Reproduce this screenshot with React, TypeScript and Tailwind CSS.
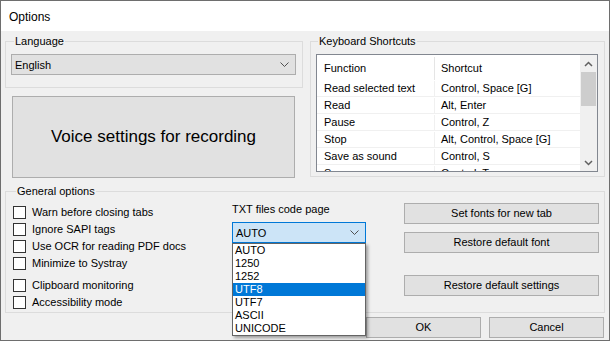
import React from "react";

function Chevron({ className = "" }: { className?: string }) {
  return (
    <svg width="9" height="5" viewBox="0 0 9 5" className={className}>
      <path d="M0.5 0.5 L4.5 4.5 L8.5 0.5" fill="none" stroke="#505050" strokeWidth="1" />
    </svg>
  );
}

function Checkbox({ label }: { label: string }) {
  return (
    <div className="flex items-center h-[17px] gap-[6px]">
      <div className="w-[13px] h-[13px] border border-[#333333] bg-white shrink-0" />
      <span className="leading-[15px] whitespace-nowrap">{label}</span>
    </div>
  );
}

function Btn({ label, className = "" }: { label: string; className?: string }) {
  return (
    <div
      className={
        "flex items-center justify-center border border-[#adadad] bg-[#e1e1e1] text-black " + className
      }
    >
      {label}
    </div>
  );
}

const rows: [string, string][] = [
  ["Read selected text", "Control, Space [G]"],
  ["Read", "Alt, Enter"],
  ["Pause", "Control, Z"],
  ["Stop", "Alt, Control, Space [G]"],
  ["Save as sound", "Control, S"],
  ["Save", "Control, T"],
];

const codePages = ["AUTO", "1250", "1252", "UTF8", "UTF7", "ASCII", "UNICODE"];

export default function App() {
  return (
    <div className="w-[610px] h-[341px] border border-[#6e6e6e] bg-[#f0f0f0] flex flex-col overflow-hidden text-[11px] text-black font-['Liberation_Sans',Arial,sans-serif]">
      {/* title bar */}
      <div className="h-[30px] bg-white flex items-center pl-[8px] pt-[1px] text-[12px] shrink-0">
        Options
      </div>

      <div className="flex flex-col px-[4px] pt-[3px]">
        {/* top row */}
        <div className="flex gap-[7px] items-start">
          {/* left col */}
          <div className="w-[298px] flex flex-col">
            <fieldset className="border border-[#dcdcdc] px-[5px] pt-[5px] pb-[12px] m-0 min-w-0">
              <legend className="ml-[3px] px-[1px] leading-[15px]">Language</legend>
              <div className="h-[21px] w-[285px] border border-[#adadad] bg-[#e1e1e1] flex items-center justify-between pl-[3px] pr-[6px]">
                <span className="leading-[13px] pt-[1px]">English</span>
                <Chevron />
              </div>
            </fieldset>
            <div className="mt-[8px] ml-[7px] w-[283px] h-[82px] border border-[#adadad] bg-[#e1e1e1] flex items-center justify-center text-[17px]">
              Voice settings for recording
            </div>
          </div>

          {/* keyboard shortcuts */}
          <fieldset className="w-[295px] border border-[#dcdcdc] pl-[5px] pt-[5px] pb-[4px] m-0 min-w-0">
            <legend className="ml-[2px] px-[1px] leading-[15px]">Keyboard Shortcuts</legend>
            <div className="w-[282px] h-[118px] border border-[#828790] bg-white flex overflow-hidden">
              <div className="flex-1 flex flex-col overflow-hidden">
                <div className="h-[25px] shrink-0 flex pt-[2px]">
                  <div className="w-[118px] pl-[7px] flex items-center border-r border-[#e5e5e5]">Function</div>
                  <div className="flex-1 pl-[6px] flex items-center">Shortcut</div>
                </div>
                {rows.map(([a, b], i) => (
                  <div key={i} className="h-[17px] shrink-0 flex border-b border-[#f0f0f0] pt-[1px]">
                    <div className="w-[118px] pl-[7px] flex items-center border-r border-[#f0f0f0] whitespace-nowrap">{a}</div>
                    <div className="flex-1 pl-[6px] flex items-center whitespace-nowrap">{b}</div>
                  </div>
                ))}
              </div>
              {/* scrollbar */}
              <div className="w-[17px] bg-[#f0f0f0] flex flex-col items-center shrink-0">
                <div className="h-[17px] flex items-center justify-center">
                  <svg width="9" height="6" viewBox="0 0 9 6">
                    <path d="M1 5 L4.5 1.5 L8 5" fill="none" stroke="#606060" strokeWidth="1.5" />
                  </svg>
                </div>
                <div className="w-[15px] h-[34px] bg-[#cdcdcd]" />
                <div className="flex-1" />
                <div className="h-[17px] flex items-center justify-center">
                  <svg width="9" height="6" viewBox="0 0 9 6">
                    <path d="M1 1 L4.5 4.5 L8 1" fill="none" stroke="#606060" strokeWidth="1.5" />
                  </svg>
                </div>
              </div>
            </div>
          </fieldset>
        </div>

        {/* general options */}
        <fieldset className="mt-[6px] border border-[#dcdcdc] pl-[7px] pr-[5px] pt-[5px] pb-[1px] m-0 min-w-0">
          <legend className="ml-[3px] px-[1px] leading-[15px]">General options</legend>
          <div className="flex">
            <div className="w-[219px] flex flex-col">
              <Checkbox label="Warn before closing tabs" />
              <Checkbox label="Ignore SAPI tags" />
              <Checkbox label="Use OCR for reading PDF docs" />
              <Checkbox label="Minimize to Systray" />
              <div className="h-[5px]" />
              <Checkbox label="Clipboard monitoring" />
              <Checkbox label="Accessibility mode" />
            </div>
            <div className="w-[134px] flex flex-col">
              <div className="leading-[15px] -mt-[2px]">TXT files code page</div>
              <div className="relative mt-[5px]">
                <div className="h-[21px] border border-[#0078d7] bg-[#cce4f7] flex items-center justify-between pl-[3px] pr-[6px]">
                  <span className="leading-[13px] pt-[1px]">AUTO</span>
                  <Chevron />
                </div>
                <div className="absolute left-0 top-[21px] w-[134px] border border-[#646464] bg-white py-0 shadow-[2px_2px_3px_rgba(0,0,0,0.35)] z-10">
                  {codePages.map((c) => (
                    <div
                      key={c}
                      className={
                        "h-[13px] leading-[13px] pl-[2px] " +
                        (c === "UTF8" ? "bg-[#0078d7] text-white" : "text-black")
                      }
                    >
                      {c}
                    </div>
                  ))}
                </div>
              </div>
            </div>
            <div className="ml-[38px] w-[195px] flex flex-col">
              <Btn label="Set fonts for new tab" className="h-[21px] -mt-[1px]" />
              <Btn label="Restore default font" className="h-[21px] mt-[8px]" />
              <Btn label="Restore default settings" className="h-[21px] mt-[22px]" />
            </div>
          </div>
        </fieldset>

        {/* bottom buttons */}
        <div className="flex justify-end gap-[8px] pr-[1px] mt-[4px]">
          <Btn label="OK" className="w-[115px] h-[21px]" />
          <Btn label="Cancel" className="w-[115px] h-[21px]" />
        </div>
      </div>
    </div>
  );
}
